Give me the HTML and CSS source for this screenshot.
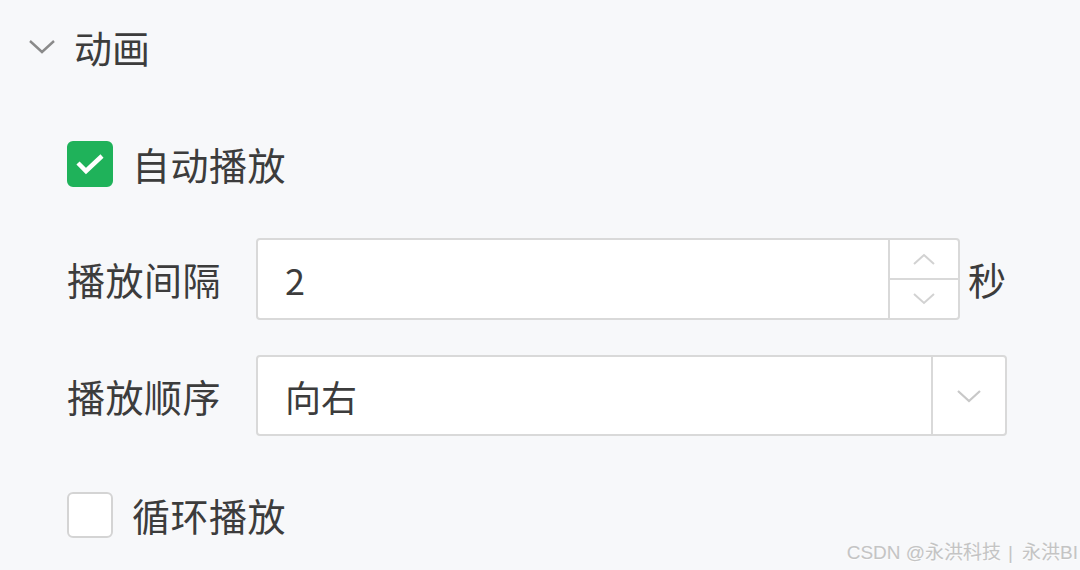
FILE: index.html
```html
<!DOCTYPE html>
<html lang="zh">
<head>
<meta charset="utf-8">
<link rel="stylesheet" href="styles.css">
</head>
<body>
<div class="panel">
  <div class="header">
    <svg class="caret" width="28" height="16" viewBox="0 0 28 16"><path d="M2 2 L14 13 L26 2" fill="none" stroke="#8a8a8a" stroke-width="2.4"/></svg>
    <span class="title">动画</span>
  </div>
  <div class="content">
    <label class="check-row first">
      <span class="box checked">
        <svg width="30" height="22" viewBox="0 0 30 22"><path d="M3 10 L11 18 L27 3" fill="none" stroke="#fff" stroke-width="4.5"/></svg>
      </span>
      <span class="check-label">自动播放</span>
    </label>
    <div class="field-row r1">
      <span class="label">播放间隔</span>
      <div class="number">
        <span class="value">2</span>
        <div class="stepper">
          <span class="step up"><svg width="24" height="14" viewBox="0 0 24 14"><path d="M2 12 L12 3 L22 12" fill="none" stroke="#d2d2d2" stroke-width="2"/></svg></span>
          <span class="step down"><svg width="24" height="14" viewBox="0 0 24 14"><path d="M2 2 L12 11 L22 2" fill="none" stroke="#d2d2d2" stroke-width="2"/></svg></span>
        </div>
      </div>
      <span class="unit">秒</span>
    </div>
    <div class="field-row r2">
      <span class="label">播放顺序</span>
      <div class="select">
        <span class="value">向右</span>
        <span class="arrow"><svg width="26" height="14" viewBox="0 0 26 14"><path d="M2 2 L13 12 L24 2" fill="none" stroke="#c8c8c8" stroke-width="2.2"/></svg></span>
      </div>
    </div>
    <label class="check-row last">
      <span class="box"></span>
      <span class="check-label">循环播放</span>
    </label>
  </div>
</div>
<div class="watermark">CSDN @永洪科技<span class="sep">|</span>永洪BI</div>
</body>
</html>
```
FILE: styles.css
```css
html, body {
  margin: 0;
  padding: 0;
}
body {
  width: 1080px;
  height: 570px;
  background: #f7f8fa;
  font-family: "Microsoft YaHei", "Noto Sans CJK SC", "Noto Sans", sans-serif;
  color: #3c3c3c;
  position: relative;
  overflow: hidden;
}
.panel {
  display: flex;
  flex-direction: column;
}
.header {
  height: 94px;
  display: flex;
  align-items: center;
  padding-left: 28px;
}
.caret {
  display: block;
  margin-right: 18px;
}
.title {
  font-size: 38px;
  line-height: 1;
}
.content {
  display: flex;
  flex-direction: column;
  padding-left: 67px;
}
.check-row {
  display: flex;
  align-items: center;
  height: 46px;
}
.check-row.first { margin-top: 47px; }
.check-row.last { margin-top: 56px; }
.box {
  width: 42px;
  height: 42px;
  border: 2px solid #d4d4d4;
  border-radius: 6px;
  background: #fff;
  display: flex;
  align-items: center;
  justify-content: center;
  box-sizing: content-box;
}
.box.checked {
  background: #1fb25a;
  border-color: #1fb25a;
}
.check-label {
  margin-left: 19px;
  font-size: 38px;
  line-height: 1;
  letter-spacing: 0.5px;
}
.field-row {
  display: flex;
  align-items: center;
}
.field-row.r1 { margin-top: 51px; }
.field-row.r2 { margin-top: 35px; }
.label {
  width: 189px;
  font-size: 38px;
  line-height: 1;
  letter-spacing: 0.5px;
}
.number, .select {
  display: flex;
  align-items: stretch;
  background: #fff;
  border: 2px solid #d9d9d9;
  border-radius: 4px;
  box-sizing: border-box;
}
.number {
  width: 704px;
  height: 82px;
}
.select {
  width: 751px;
  height: 81px;
}
.value {
  flex: 1;
  display: flex;
  align-items: center;
  padding-left: 27px;
  font-size: 36px;
}
.stepper {
  width: 68px;
  border-left: 2px solid #d9d9d9;
  display: flex;
  flex-direction: column;
}
.step {
  flex: 1;
  display: flex;
  align-items: center;
  justify-content: center;
}
.step.up {
  border-bottom: 2px solid #d9d9d9;
}
.unit {
  margin-left: 8px;
  font-size: 38px;
  line-height: 1;
}
.arrow {
  width: 72px;
  border-left: 2px solid #d9d9d9;
  display: flex;
  align-items: center;
  justify-content: center;
}
.watermark {
  position: absolute;
  right: 2px;
  bottom: 6px;
  font-family: "Liberation Sans", "Noto Sans CJK SC", sans-serif;
  font-size: 19px;
  color: #c4c4c4;
  text-shadow: 0 1px 1px rgba(255,255,255,0.9), 0 0 1px rgba(0,0,0,0.05);
  white-space: nowrap;
}
.sep {
  margin: 0 9px 0 7px;
}
```
